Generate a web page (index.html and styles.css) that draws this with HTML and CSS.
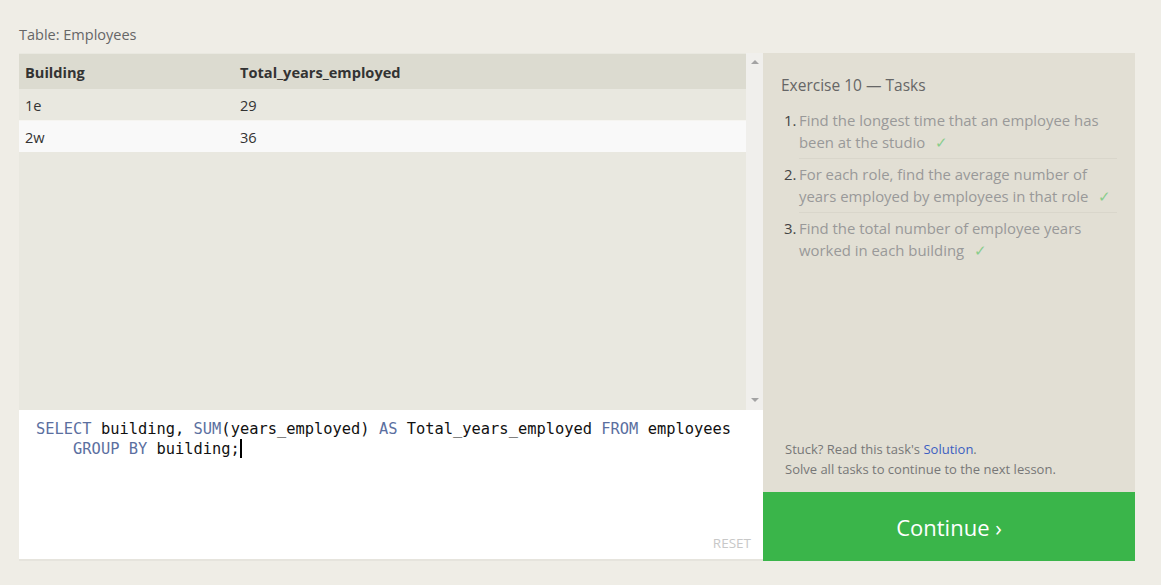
FILE: index.html
```html
<!DOCTYPE html>
<html>
<head>
<meta charset="utf-8">
<link rel="stylesheet" href="styles.css">
</head>
<body>
<div class="page">
  <div class="caption">Table: Employees</div>
  <div class="frame">
    <div class="left">
      <div class="results">
        <div class="table-wrap">
          <table class="grid">
            <thead>
              <tr><th class="c1">Building</th><th>Total_years_employed</th></tr>
            </thead>
            <tbody>
              <tr class="odd"><td class="c1">1e</td><td>29</td></tr>
              <tr class="even"><td class="c1">2w</td><td>36</td></tr>
            </tbody>
          </table>
        </div>
        <div class="scrollbar">
          <span class="arrow up"></span>
          <span class="arrow down"></span>
        </div>
      </div>
      <div class="editor">
        <div class="code"><span class="kw">SELECT</span> building, <span class="kw">SUM</span>(years_employed) <span class="kw">AS</span> Total_years_employed <span class="kw">FROM</span> employees
    <span class="kw">GROUP BY</span> building;<span class="cursor"></span></div>
        <div class="reset-row"><span class="reset">RESET</span></div>
      </div>
    </div>
    <div class="right">
      <div class="tasks">
        <h2 class="title">Exercise 10 — Tasks</h2>
        <ol class="task-list">
          <li><span class="num">1.</span><span class="txt">Find the longest time that an employee has been at the studio <span class="check">✓</span></span></li>
          <li><span class="num">2.</span><span class="txt">For each role, find the average number of years employed by employees in that role <span class="check">✓</span></span></li>
          <li><span class="num">3.</span><span class="txt">Find the total number of employee years worked in each building <span class="check">✓</span></span></li>
        </ol>
        <div class="help">
          <p>Stuck? Read this task's <a class="link">Solution</a>.</p>
          <p>Solve all tasks to continue to the next lesson.</p>
        </div>
      </div>
      <div class="continue">Continue ›</div>
    </div>
  </div>
</div>
</body>
</html>
```
FILE: styles.css
```css
html, body {
  margin: 0;
  padding: 0;
  background: #efede6;
}
body {
  font-family: "Open Sans", "Noto Sans", sans-serif;
  color: #333;
}
.page {
  padding: 24px 26px 0 19px;
}
.caption {
  font-size: 14.5px;
  color: #666;
  height: 29px;
  line-height: 21px;
}
.frame {
  display: flex;
  width: 1116px;
  height: 508px;
}
.left {
  width: 744px;
  display: flex;
  flex-direction: column;
}
.results {
  height: 357px;
  display: flex;
  background: #e9e8e0;
}
.table-wrap {
  flex: 1;
  padding-top: 1px;
}
.grid {
  width: 100%;
  border-collapse: collapse;
  font-size: 14.6px;
}
.grid th {
  background: #dcdbd0;
  text-align: left;
  font-weight: 700;
  color: #333;
  height: 35px;
  padding: 0 6px;
}
.grid td {
  height: 31px;
  padding: 0 6px;
  color: #333;
}
.grid .c1 {
  width: 203px;
}
.grid tr.odd td {
  background: #e9e8e0;
  border-bottom: 1px solid #f6f5f1;
}
.grid tr.even td {
  background: #f9f9f9;
}
.scrollbar {
  width: 17px;
  background: #f0efec;
  display: flex;
  flex-direction: column;
  justify-content: space-between;
  align-items: center;
  padding: 7px 0 8px;
  box-sizing: border-box;
}
.arrow {
  width: 0;
  height: 0;
  border-left: 4px solid transparent;
  border-right: 4px solid transparent;
}
.arrow.up {
  border-bottom: 4px solid #a3a3a3;
}
.arrow.down {
  border-top: 4px solid #a3a3a3;
}
.editor {
  flex: 1;
  background: #fff;
  display: flex;
  flex-direction: column;
  border-bottom: 2px solid #e6e4dd;
}
.code {
  flex: 1;
  font-family: "DejaVu Sans Mono", monospace;
  font-size: 15.4px;
  line-height: 20px;
  white-space: pre;
  color: #111;
  padding: 9px 0 0 17px;
}
.kw {
  color: #5b6f9f;
}
.cursor {
  display: inline-block;
  width: 2px;
  height: 19px;
  background: #000;
  vertical-align: -4px;
}
.reset-row {
  display: flex;
  justify-content: flex-end;
  padding: 0 12px 7px 0;
}
.reset {
  font-size: 13.5px;
  color: #c8c8c8;
}
.right {
  width: 372px;
  display: flex;
  flex-direction: column;
}
.tasks {
  flex: 1;
  background: #e2dfd4;
  padding: 21px 18px 13px 18px;
  display: flex;
  flex-direction: column;
}
.title {
  margin: 0 0 13px 0;
  font-size: 15.5px;
  font-weight: 400;
  color: #666;
}
.task-list {
  list-style: none;
  margin: 0;
  padding: 0 0 0 3px;
  font-size: 14.9px;
  line-height: 22px;
}
.task-list li {
  display: flex;
}
.num {
  width: 15px;
  color: #444;
}
.txt {
  flex: 1;
  color: #999;
  padding-bottom: 5px;
  margin-bottom: 4px;
  border-bottom: 1px solid #d9d6cb;
}
.task-list li:last-child .txt {
  border-bottom: none;
}
.check {
  color: #89cd8c;
  margin-left: 6px;
}
.help {
  margin-top: auto;
  font-size: 13px;
  color: #777;
  line-height: 20px;
  padding-left: 4px;
}
.help p {
  margin: 0;
}
.link {
  color: #3c5ec1;
}
.continue {
  height: 69px;
  background: #3ab54a;
  color: #fff;
  font-size: 22px;
  display: flex;
  align-items: center;
  justify-content: center;
}
```
